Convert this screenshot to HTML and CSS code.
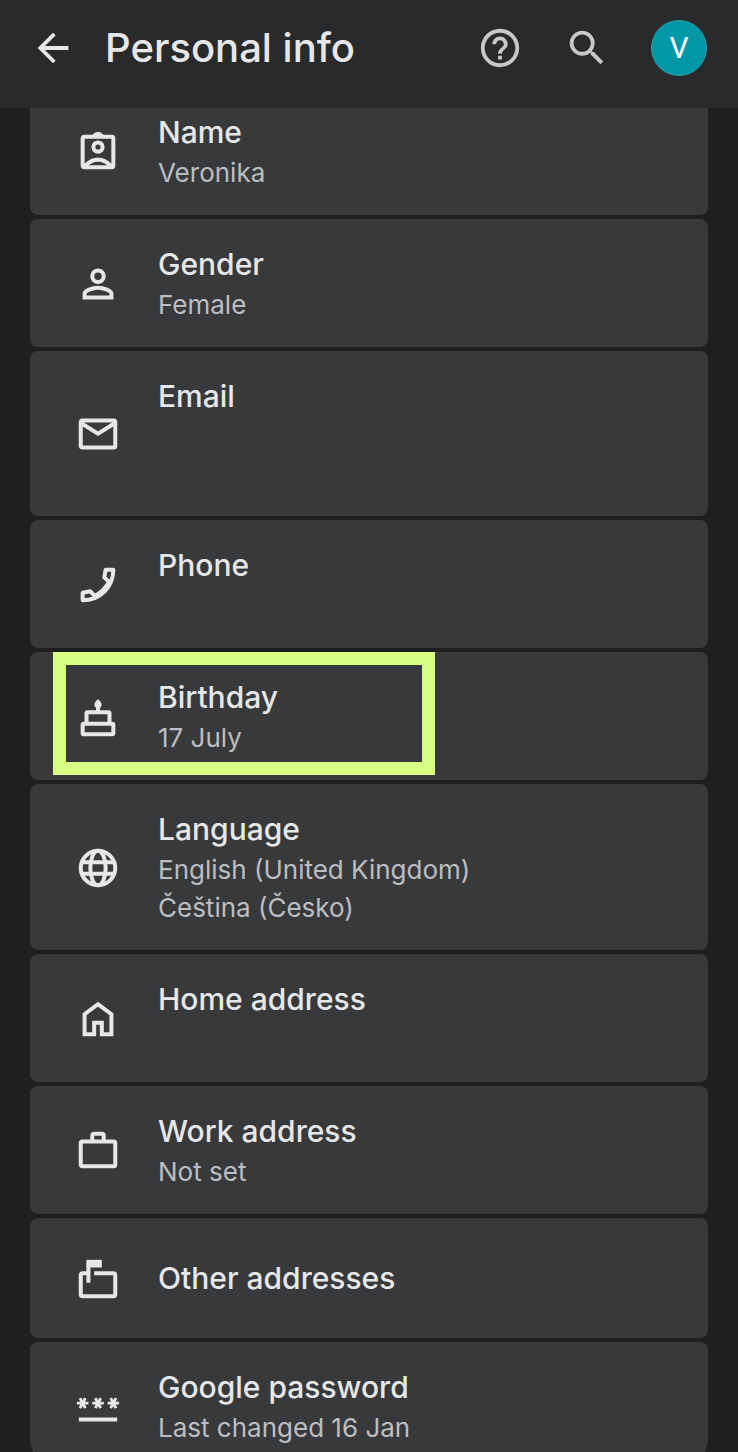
FILE: index.html
```
<!DOCTYPE html>
<html lang="en">
<head>
    <meta charset="utf-8">
    <meta name="viewport" content="width=device-width, initial-scale=1">
    <title>Personal info</title>
    <link rel="stylesheet" href="styles.css">
</head>
<body>
    <!-- Top bar -->
    <header class="top-bar">
        <button class="icon-btn back-btn" aria-label="Back">
            <svg viewBox="0 0 24 24"><path d="M20 11H7.83l5.59-5.59L12 4l-8 8 8 8 1.41-1.41L7.83 13H20v-2z"/></svg>
        </button>
        <h1>Personal info</h1>
        <div class="actions">
            <button class="icon-btn" aria-label="Help">
                <svg viewBox="0 0 24 24"><path d="M11 18h2v-2h-2v2zm1-16C6.48 2 2 6.48 2 12s4.48 10 10 10 10-4.48 10-10S17.52 2 12 2zm0 18c-4.41 0-8-3.59-8-8s3.59-8 8-8 8 3.59 8 8-3.59 8-8 8zm0-14c-2.21 0-4 1.79-4 4h2c0-1.1.9-2 2-2s2 .9 2 2c0 2-3 1.75-3 5h2c0-2.25 3-2.5 3-5 0-2.21-1.79-4-4-4z"/></svg>
            </button>
            <button class="icon-btn" aria-label="Search">
                <svg viewBox="0 0 24 24"><path d="M15.5 14h-.79l-.28-.27A6.471 6.471 0 0 0 16 9.5 6.5 6.5 0 1 0 9.5 16c1.61 0 3.09-.59 4.23-1.57l.27.28v.79l5 4.99L20.49 19l-4.99-5zm-6 0C7.01 14 5 11.99 5 9.5S7.01 5 9.5 5 14 7.01 14 9.5 11.99 14 9.5 14z"/></svg>
            </button>
            <button class="avatar" aria-label="Account">V</button>
        </div>
    </header>

    <!-- Info list -->
    <main class="scroll-area">
        <div class="info-list">
            <a class="row" href="#name">
                <svg class="line" viewBox="0 0 24 24"><rect x="4" y="4" width="16" height="16" rx=".8"/><path d="M9.800 4a2.300 2.300 0 0 1 4.400 0" stroke-width="1.600"/><circle cx="12" cy="9.4" r="2.400"/><path d="M5 19.500Q12 12.500 19 19.500"/></svg>
                <div class="text">
                    <h2>Name</h2>
                    <p>Veronika</p>
                </div>
            </a>
            <a class="row" href="#gender">
                <svg class="line" viewBox="0 0 24 24"><circle cx="12" cy="8" r="3"/><path d="M5 19v-2c0-1.400 4-3 7-3s7 1.600 7 3v2z"/></svg>
                <div class="text">
                    <h2>Gender</h2>
                    <p>Female</p>
                </div>
            </a>
            <a class="row row-tall" href="#email">
                <svg class="line" viewBox="0 0 24 24"><rect x="3" y="5" width="18" height="14" rx=".8"/><path d="M3.500 6.500l8.500 5.300 8.500-5.300"/></svg>
                <div class="text">
                    <h2>Email</h2>
                </div>
            </a>
            <a class="row" href="#phone">
                <svg class="line" viewBox="0 0 24 24" stroke-linejoin="round"><path d="M20 4h-4l-.7 4 2.500 2.400C16.200 13.400 13.400 16.200 10.400 17.800L8 15.300l-4 .7v4C13 20 20 13 20 4z"/><path d="M17.200 11.500Q15 15 11.500 17.200"/></svg>
                <div class="text">
                    <h2>Phone</h2>
                </div>
            </a>
            <a class="row highlighted" href="#birthday">
                <svg class="line" viewBox="0 0 24 24"><rect x="4" y="15.500" width="16" height="5.500" rx=".5"/><path d="M6 15.500V10q0-.5.500-.5h11q.5 0 .5.500v5.500M12 9V5"/><path class="solid" d="M12 2.600c1 1.100 1.900 1.900 1.900 2.900a1.900 1.900 0 0 1-3.800 0c0-1 .9-1.800 1.900-2.900z"/></svg>
                <div class="text">
                    <h2>Birthday</h2>
                    <p>17 July</p>
                </div>
            </a>
            <a class="row row-tall" href="#language">
                <svg class="line" viewBox="0 0 24 24"><circle cx="12" cy="12" r="9"/><ellipse cx="12" cy="12" rx="4" ry="9"/><path d="M3.500 9h17M3.500 15h17"/></svg>
                <div class="text">
                    <h2>Language</h2>
                    <p>English (United Kingdom)</p>
                    <p>Čeština (Česko)</p>
                </div>
            </a>
            <a class="row" href="#home-address">
                <svg class="line" viewBox="0 0 24 24"><path d="M5 20V9.500l7-5.200 7 5.200V20h-5v-6h-4v6z"/></svg>
                <div class="text">
                    <h2>Home address</h2>
                </div>
            </a>
            <a class="row" href="#work-address">
                <svg class="line" viewBox="0 0 24 24"><rect x="3" y="7" width="18" height="13" rx=".8"/><path d="M9 7V4q0-1 1-1h4q1 0 1 1v3"/></svg>
                <div class="text">
                    <h2>Work address</h2>
                    <p>Not set</p>
                </div>
            </a>
            <a class="row row-short" href="#other-addresses">
                <svg class="line" viewBox="0 0 24 24"><path d="M7 9H4q-1 0-1 1v10q0 1 1 1h16q1 0 1-1V10q0-1-1-1H10M7 14V3"/><path class="solid" d="M6 2h8v4H6z"/></svg>
                <div class="text">
                    <h2>Other addresses</h2>
                </div>
            </a>
            <a class="row" href="#password">
                <svg class="line wide" viewBox="0 0 24 24"><path d="M2 18.500h20"/><g stroke-width="1.500"><path d="M1 10h6M2.600 7.400l2.800 5.200M5.400 7.400l-2.800 5.200"/><path d="M9 10h6M10.600 7.400l2.800 5.200M13.400 7.400l-2.800 5.200"/><path d="M17 10h6M18.600 7.400l2.800 5.200M21.400 7.400l-2.800 5.200"/></g></svg>
                <div class="text">
                    <h2>Google password</h2>
                    <p>Last changed 16 Jan</p>
                </div>
            </a>
        </div>
    </main>
</body>
</html>
```

FILE: styles.css
```
*, *::after {
    box-sizing: border-box;
}

body {
    margin: 0;
    height: 100vh;
    display: flex;
    flex-direction: column;
    overflow: hidden;
    background: #1e1f21;
    color: #e6e7e9;
    font-family: Inter, "Noto Sans", sans-serif;
}

h1, h2, p {
    margin: 0;
}

svg {
    width: 46px;
    height: 46px;
    flex: none;
    display: block;
    fill: currentColor;
}

/* Stroked icons */
.line {
    fill: none;
    stroke: currentColor;
    stroke-width: 2.1;
}

.line .solid {
    fill: currentColor;
    stroke: none;
}

.wide {
    overflow: visible;
}

/* Top bar */
.top-bar {
    position: relative;
    z-index: 1;
    flex: none;
    display: flex;
    align-items: center;
    height: 108px;
    padding: 0 31px 12px 30px;
    background: #292a2c;
}

.top-bar h1 {
    margin-left: 29px;
    font-size: 40px;
    line-height: 48px;
    font-weight: 500;
}

.icon-btn {
    padding: 0;
    border: none;
    background: none;
    color: #c8c8ca;
    cursor: pointer;
}

.back-btn {
    color: #e6e7e9;
}

.actions {
    display: flex;
    align-items: center;
    gap: 41px;
    margin-left: auto;
}

.avatar {
    width: 56px;
    height: 56px;
    padding: 0;
    border: 1px solid #2a9fa8;
    border-radius: 50%;
    background: #0097a7;
    color: #fff;
    font-family: Roboto, sans-serif;
    font-size: 30px;
    line-height: 54px;
    cursor: pointer;
}

/* Info list, scrolled a little under the top bar */
.scroll-area {
    flex: 1;
    min-height: 0;
    overflow: hidden;
    padding: 0 30px;
}

.info-list {
    display: flex;
    flex-direction: column;
    gap: 4px;
    margin-top: -21px;
}

.row {
    position: relative;
    display: flex;
    align-items: center;
    gap: 37px;
    min-height: 128px;
    padding: 24px 24px 23px 45px;
    border-radius: 8px;
    background: #38393b;
    color: inherit;
    text-decoration: none;
}

.row:last-child {
    border-radius: 8px 8px 32px 32px;
}

.row-tall {
    min-height: 165px;
}

.row-short {
    min-height: 120px;
}

.text {
    align-self: flex-start;
}

.row-short .text {
    align-self: center;
}

.text h2 {
    margin-bottom: 1px;
    font-size: 30px;
    line-height: 42px;
    font-weight: 500;
}

.text p {
    font-size: 26px;
    line-height: 38px;
    color: #bdbec1;
}

/* Marker box around the birthday entry */
.highlighted::after {
    content: "";
    position: absolute;
    top: 0;
    left: 23px;
    width: 382px;
    height: 123px;
    border: 13px solid #d9ff85;
}
```
